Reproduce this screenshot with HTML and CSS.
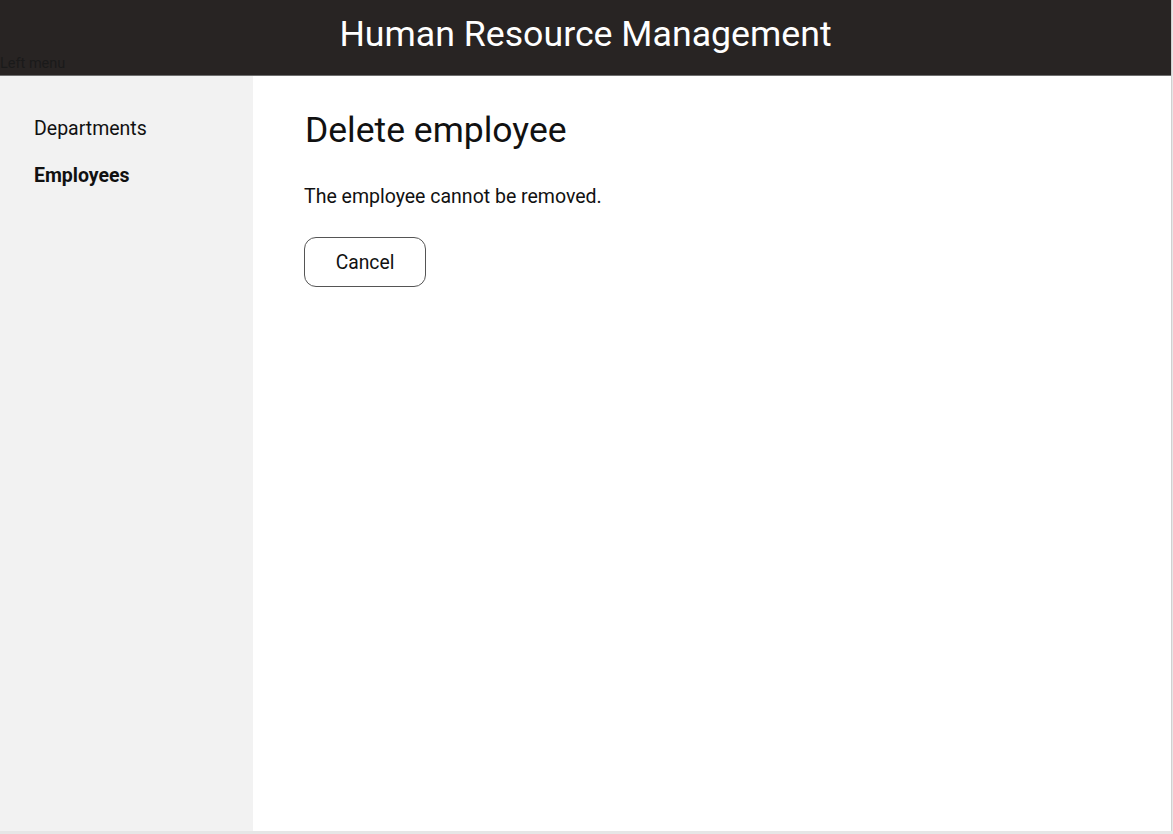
FILE: index.html
```html
<!DOCTYPE html>
<html>
<head>
<meta charset="utf-8">
<link rel="stylesheet" href="styles.css">
</head>
<body>
<div class="frame">
  <header class="topbar">
    <h1 class="title">Human Resource Management</h1>
    <div class="menu-label">Left menu</div>
  </header>
  <div class="body">
    <nav class="sidebar">
      <a class="nav-item">Departments</a>
      <a class="nav-item active">Employees</a>
    </nav>
    <main class="content">
      <h2 class="heading">Delete employee</h2>
      <p class="message">The employee cannot be removed.</p>
      <button class="btn">Cancel</button>
    </main>
  </div>
</div>
</body>
</html>
```
FILE: styles.css
```css
html, body {
  margin: 0;
  padding: 0;
  background: #e6e6e6;
  font-family: Roboto, "Liberation Sans", sans-serif;
  color: #111;
}
.frame {
  width: 1171px;
  height: 831px;
  border-right: 1px solid #d0d0d0;
  display: flex;
  flex-direction: column;
  background: #fff;
}
.topbar {
  height: 75px;
  background: #282423;
  border-bottom: 1px solid #6e6e6e;
  box-sizing: content-box;
}
.title {
  margin: 0;
  padding-top: 13px;
  text-align: center;
  font-weight: 400;
  font-size: 35.7px;
  line-height: 42px;
  color: #fff;
}
.menu-label {
  font-size: 14.5px;
  line-height: 16px;
  color: #1a1a1a;
  padding-top: 1px;
}
.body {
  flex: 1;
  display: flex;
}
.sidebar {
  width: 253px;
  background: #f2f2f2;
  display: flex;
  flex-direction: column;
  padding: 41px 0 0 34px;
  box-sizing: border-box;
  gap: 24px;
}
.nav-item {
  font-size: 19.5px;
  line-height: 23px;
  color: #111;
}
.nav-item.active {
  font-weight: 700;
}
.content {
  flex: 1;
  padding: 33px 0 0 52px;
}
.heading {
  margin: 0;
  font-size: 35.5px;
  line-height: 42px;
  font-weight: 400;
  color: #111;
}
.message {
  margin: 34px 0 0 -1px;
  font-size: 19.5px;
  line-height: 23px;
}
.btn {
  margin: 29px 0 0 -1px;
  width: 122px;
  height: 50px;
  border: 1px solid #555;
  border-radius: 12px;
  background: #fff;
  font-family: Roboto, "Liberation Sans", sans-serif;
  font-size: 19.3px;
  color: #111;
}
```
